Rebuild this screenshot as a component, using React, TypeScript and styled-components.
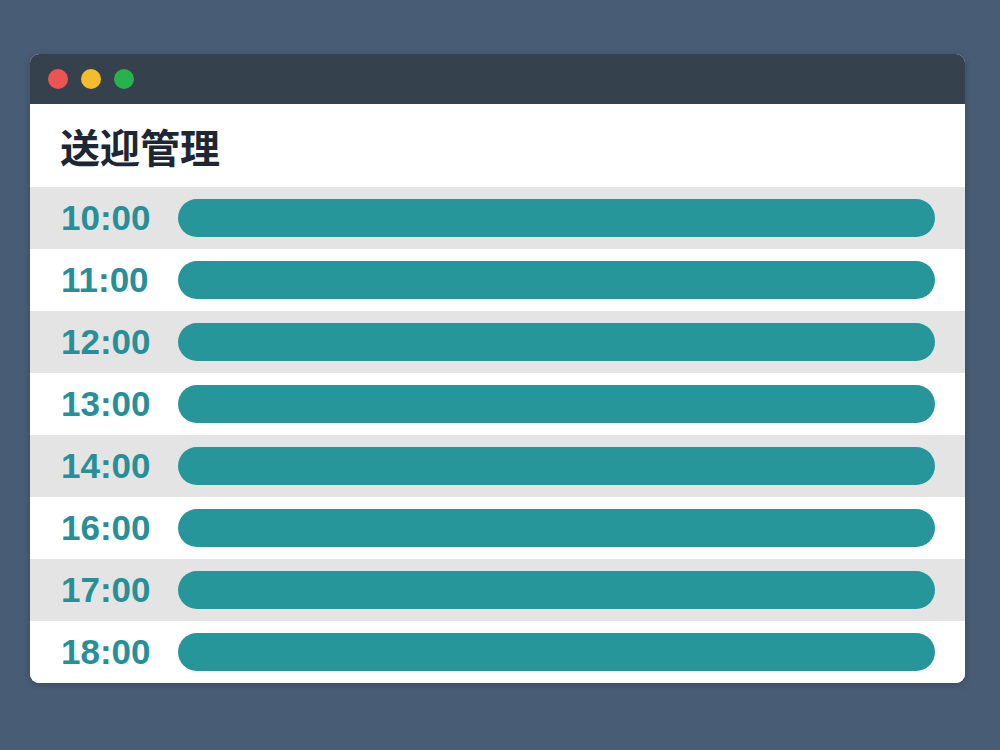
import React from "react";
import styled, { createGlobalStyle } from "styled-components";

const GlobalStyle = createGlobalStyle`
  html, body {
    margin: 0;
    padding: 0;
    background: #485c75;
    font-family: "Liberation Sans", "Noto Sans CJK JP", sans-serif;
  }
`;

const Page = styled.div`
  width: 1000px;
  height: 750px;
  box-sizing: border-box;
  padding: 54px 35px 0 30px;
  background: #485c75;
`;

const Window = styled.div`
  width: 935px;
  border-radius: 9px;
  overflow: hidden;
  background: #ffffff;
  box-shadow: 0 2px 6px rgba(20, 30, 45, 0.25);
`;

const TitleBar = styled.div`
  height: 50px;
  background: #36414e;
  display: flex;
  align-items: center;
  gap: 13px;
  padding-left: 18px;
`;

const Dot = styled.span<{ $color: string }>`
  width: 20px;
  height: 20px;
  border-radius: 50%;
  background: ${(p) => p.$color};
`;

const Header = styled.div`
  height: 83px;
  display: flex;
  align-items: center;
  padding-left: 30px;
`;

const Title = styled.h1`
  margin: 0;
  font-family: "Noto Sans CJK JP", sans-serif;
  font-size: 40px;
  font-weight: 700;
  color: #1d2733;
`;

const Row = styled.div<{ $shaded: boolean }>`
  height: 62px;
  display: flex;
  align-items: center;
  padding: 0 30px 0 31px;
  background: ${(p) => (p.$shaded ? "#e4e4e4" : "#ffffff")};
`;

const Time = styled.span`
  width: 117px;
  font-size: 35px;
  font-weight: 700;
  color: #268f97;
`;

const Bar = styled.div`
  flex: 1;
  height: 38px;
  border-radius: 19px;
  background: #26969b;
`;

const times = ["10:00", "11:00", "12:00", "13:00", "14:00", "16:00", "17:00", "18:00"];

export default function App() {
  return (
    <>
      <GlobalStyle />
      <Page>
        <Window>
          <TitleBar>
            <Dot $color="#ec5454" />
            <Dot $color="#f5bd2c" />
            <Dot $color="#27b24d" />
          </TitleBar>
          <Header>
            <Title>送迎管理</Title>
          </Header>
          {times.map((t, i) => (
            <Row key={t} $shaded={i % 2 === 0}>
              <Time>{t}</Time>
              <Bar />
            </Row>
          ))}
        </Window>
      </Page>
    </>
  );
}
